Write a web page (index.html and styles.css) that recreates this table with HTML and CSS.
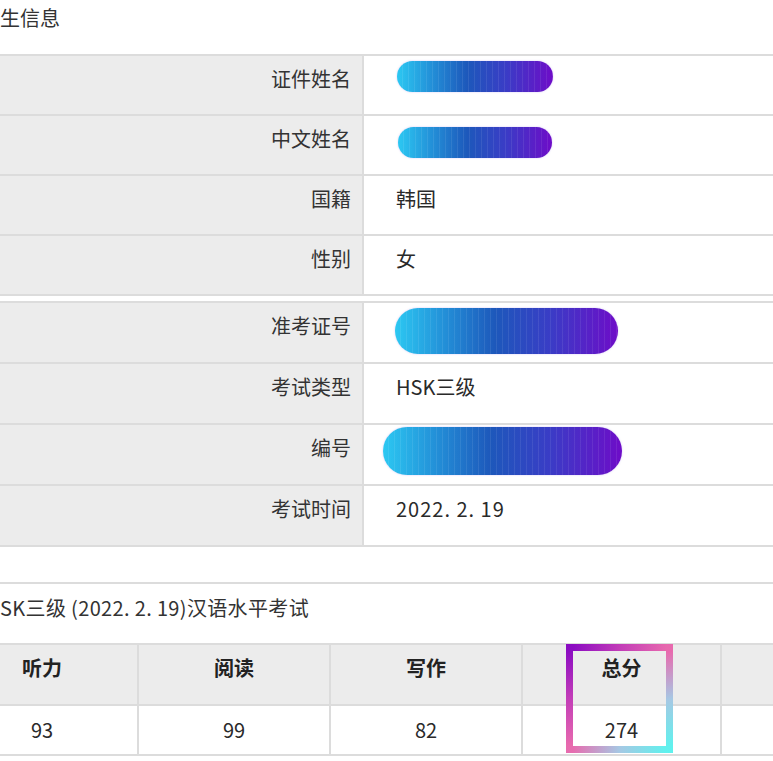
FILE: index.html
```html
<!DOCTYPE html>
<html lang="zh-CN">
<head>
<meta charset="utf-8">
<link rel="stylesheet" href="styles.css">
</head>
<body>
<div class="page">
  <div class="title">生信息</div>

  <div class="info group-a">
    <div class="row"><div class="label">证件姓名</div><div class="value"><span class="pill pill-1"></span></div></div>
    <div class="row"><div class="label">中文姓名</div><div class="value"><span class="pill pill-2"></span></div></div>
    <div class="row"><div class="label">国籍</div><div class="value">韩国</div></div>
    <div class="row"><div class="label">性别</div><div class="value">女</div></div>
  </div>

  <div class="info group-b">
    <div class="row"><div class="label">准考证号</div><div class="value"><span class="pill pill-3"></span></div></div>
    <div class="row"><div class="label">考试类型</div><div class="value">HSK三级</div></div>
    <div class="row"><div class="label">编号</div><div class="value"><span class="pill pill-4"></span></div></div>
    <div class="row"><div class="label">考试时间</div><div class="value date">2022. 2. 19</div></div>
  </div>

  <div class="exam">
    <div class="subtitle">SK三级 (2022. 2. 19)汉语水平考试</div>
    <div class="scores">
      <div class="cell head">听力</div>
      <div class="cell head">阅读</div>
      <div class="cell head">写作</div>
      <div class="cell head">总分</div>
      <div class="cell head last"></div>
      <div class="cell data">93</div>
      <div class="cell data">99</div>
      <div class="cell data">82</div>
      <div class="cell data">274</div>
      <div class="cell data last"></div>
      <div class="highlight"></div>
    </div>
  </div>
</div>
</body>
</html>
```

FILE: styles.css
```css
html, body {
  margin: 0;
  padding: 0;
  background: #ffffff;
}

body {
  font-family: "Noto Sans CJK SC", "Noto Sans", sans-serif;
  color: #2b2b2b;
  overflow: hidden;
  width: 773px;
  height: 761px;
}

.page {
  width: 773px;
}

.title {
  font-size: 20px;
  line-height: 24px;
  padding-top: 6px;
  height: 48px;
  color: #333;
}

.info {
  border-top: 2px solid #dcdcdc;
}

.group-b {
  margin-top: 5px;
}

.row {
  display: grid;
  grid-template-columns: 364px 1fr;
  height: 60px;
  box-sizing: border-box;
  border-bottom: 2px solid #dcdcdc;
}

.group-b .row {
  height: 61px;
}

.label {
  background: #ececec;
  border-right: 2px solid #dcdcdc;
  text-align: right;
  padding: 11px 11px 0 0;
  font-size: 20px;
  line-height: 24px;
  color: #333;
}

.value {
  display: flex;
  align-items: flex-start;
  padding: 11px 0 0 32px;
  font-size: 20px;
  line-height: 24px;
  color: #2a2a2a;
}

.value.date {
  letter-spacing: 1px;
}

.pill {
  display: block;
  border-radius: 999px;
  background:
    repeating-linear-gradient(90deg, rgba(255,255,255,0) 0 5px, rgba(255,255,255,0.08) 5px 6px),
    linear-gradient(90deg, #2cc8f2 0%, #2390d8 22%, #1d58bb 45%, #3a3cc6 70%, #6e0cc8 100%);
  box-shadow: 0 0 2px rgba(120, 80, 230, 0.35);
}

.pill-1 {
  width: 156px;
  height: 31px;
  margin-top: -6px;
  margin-left: 1px;
}

.pill-2 {
  width: 154px;
  height: 31px;
  margin-top: 0;
  margin-left: 2px;
}

.pill-3 {
  width: 223px;
  height: 46px;
  margin-top: -6px;
  margin-left: -1px;
}

.pill-4 {
  width: 239px;
  height: 48px;
  margin-top: -9px;
  margin-left: -13px;
}

.exam {
  margin-top: 35px;
  border-top: 2px solid #dcdcdc;
}

.subtitle {
  font-size: 20px;
  line-height: 24px;
  letter-spacing: 0.35px;
  padding-top: 12px;
  height: 47px;
  color: #333;
}

.scores {
  position: relative;
  display: grid;
  grid-template-columns: 192px 192px 192px 199px 1fr;
  grid-template-rows: 61px 48px;
  margin-left: -53px;
  width: 826px;
  border-top: 2px solid #dcdcdc;
  border-bottom: 2px solid #dcdcdc;
}

.cell {
  border-right: 2px solid #dcdcdc;
  text-align: center;
  font-size: 20px;
  line-height: 24px;
}

.cell.last {
  border-right: none;
}

.head {
  background: #ececec;
  font-weight: bold;
  padding-top: 11px;
  color: #222;
  border-bottom: 2px solid #dcdcdc;
}

.data {
  padding-top: 12px;
  color: #2a2a2a;
}

.highlight {
  position: absolute;
  left: 619px;
  top: -1px;
  width: 107px;
  height: 109px;
  box-sizing: border-box;
  border: 7px solid transparent;
  border-image: linear-gradient(135deg, #8a0bc2 0%, #c23cb8 25%, #e86aae 50%, #a6c8e4 75%, #5ef2ee 100%) 1;
}
```
